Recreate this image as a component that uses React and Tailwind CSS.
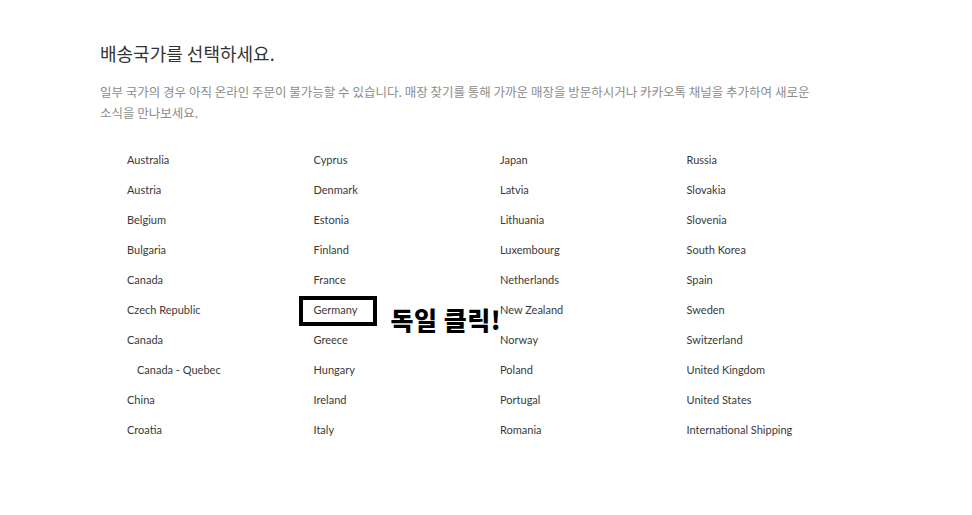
const COLUMNS = [
  ['Australia', 'Austria', 'Belgium', 'Bulgaria', 'Canada', 'Czech Republic', 'Canada', '  Canada - Quebec', 'China', 'Croatia'],
  ['Cyprus', 'Denmark', 'Estonia', 'Finland', 'France', 'Germany', 'Greece', 'Hungary', 'Ireland', 'Italy'],
  ['Japan', 'Latvia', 'Lithuania', 'Luxembourg', 'Netherlands', 'New Zealand', 'Norway', 'Poland', 'Portugal', 'Romania'],
  ['Russia', 'Slovakia', 'Slovenia', 'South Korea', 'Spain', 'Sweden', 'Switzerland', 'United Kingdom', 'United States', 'International Shipping'],
];

function Country({ name }) {
  const sub = name.startsWith('  ');
  const label = name.trim();

  if (label === 'Germany') {
    return (
      <li className="relative flex h-[30px] items-center">
        <span className="absolute left-[-15px] top-[1px] h-[30px] w-[78px] border-[4px] border-black" />
        <span className="relative">{label}</span>
        {/* annotation on top of the list */}
        <span
          className="absolute left-[77px] top-[12px] whitespace-nowrap text-[25px] font-black leading-none text-black tracking-[0.5px]"
          style={{ fontFamily: '"Noto Sans CJK KR", sans-serif' }}
        >
          독일 클릭!
        </span>
      </li>
    );
  }

  return (
    <li className={'flex h-[30px] items-center' + (sub ? ' pl-[10px]' : '')}>
      {label}
    </li>
  );
}

export default function App() {
  return (
    <div className="min-h-[515px] bg-white" style={{ fontFamily: '"Noto Sans CJK KR", "Noto Sans", sans-serif' }}>
      <div className="w-[773px] pl-[100px] pt-[41px] box-content">
        <h2 className="h-[24px] text-[18px] leading-[24px] text-[#333]">배송국가를 선택하세요.</h2>
        <p className="mt-4 max-w-[725px] break-keep text-[12.5px] leading-[21px] text-[#8c8c8c]">
          일부 국가의 경우 아직 온라인 주문이 불가능할 수 있습니다. 매장 찾기를 통해 가까운 매장을 방문하시거나 카카오톡 채널을 추가하여 새로운 소식을 만나보세요.
        </p>

        <div
          className="mt-[22px] grid grid-cols-4 pl-[27px] text-[11px] text-[#3a3a3a]"
          style={{ fontFamily: 'Lato, "Open Sans", sans-serif' }}
        >
          {COLUMNS.map((col, i) => (
            <ul key={i}>
              {col.map((c, j) => (
                <Country key={j} name={c} />
              ))}
            </ul>
          ))}
        </div>
      </div>
    </div>
  );
}
